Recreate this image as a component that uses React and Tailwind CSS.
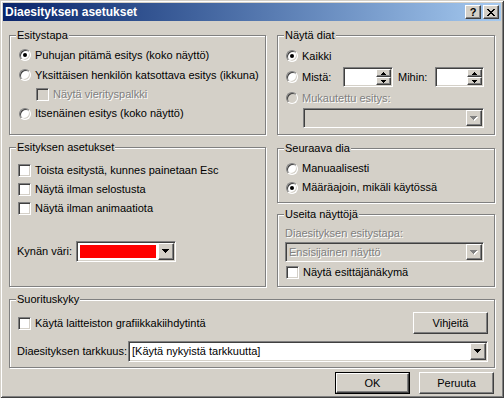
const raised =
  "bg-[#d4d0c8] border border-t-white border-l-white border-r-[#404040] border-b-[#404040] shadow-[inset_-1px_-1px_0_#808080]";
const sunken =
  "border border-t-[#808080] border-l-[#808080] border-r-white border-b-white shadow-[inset_1px_1px_0_#404040,inset_-1px_-1px_0_#d4d0c8]";
const dim = "text-[#808080] [text-shadow:1px_1px_0_#fff]";

const Arrow = ({ disabled }) => (
  <svg width="8" height="5" viewBox="0 0 8 5" shapeRendering="crispEdges">
    {disabled && (
      <g fill="#fff">
        <rect x="1" y="1" width="7" height="1" />
        <rect x="2" y="2" width="5" height="1" />
        <rect x="3" y="3" width="3" height="1" />
        <rect x="4" y="4" width="1" height="1" />
      </g>
    )}
    <g fill={disabled ? "#808080" : "#000"}>
      <rect x="0" y="0" width="7" height="1" />
      <rect x="1" y="1" width="5" height="1" />
      <rect x="2" y="2" width="3" height="1" />
      <rect x="3" y="3" width="1" height="1" />
    </g>
  </svg>
);

const SmallArrow = ({ up }) => (
  <svg width="5" height="3" viewBox="0 0 5 3" shapeRendering="crispEdges" fill="#000">
    {up ? (
      <>
        <rect x="2" y="0" width="1" height="1" />
        <rect x="1" y="1" width="3" height="1" />
        <rect x="0" y="2" width="5" height="1" />
      </>
    ) : (
      <>
        <rect x="0" y="0" width="5" height="1" />
        <rect x="1" y="1" width="3" height="1" />
        <rect x="2" y="2" width="1" height="1" />
      </>
    )}
  </svg>
);

const Radio = ({ checked, disabled }) => (
  <span
    className={`w-[12px] h-[12px] shrink-0 rounded-full border border-t-[#808080] border-l-[#808080] border-r-white border-b-white shadow-[inset_1px_1px_0_#404040,inset_-1px_-1px_0_#d4d0c8] flex items-center justify-center ${
      disabled ? "bg-[#d4d0c8]" : "bg-white"
    }`}
  >
    {checked && <span className="w-[4px] h-[4px] rounded-full bg-black" />}
  </span>
);

const Check = ({ disabled }) => (
  <span
    className={`w-[13px] h-[13px] shrink-0 ${sunken} ${disabled ? "bg-[#d4d0c8]" : "bg-white"}`}
  />
);

const Group = ({ title, className, children }) => (
  <div
    className={`relative border border-[#808080] shadow-[1px_1px_0_#fff,inset_1px_1px_0_#fff] ${className}`}
  >
    <span className="absolute left-[6px] -top-[7px] bg-[#d4d0c8] px-[1px] leading-[13px]">
      {title}
    </span>
    {children}
  </div>
);

const Combo = ({ className, disabled, children }) => (
  <div
    className={`${sunken} flex items-stretch p-[1px] ${disabled ? "bg-[#d4d0c8]" : "bg-white"} ${className}`}
  >
    <div className="flex-1 flex items-center overflow-hidden">{children}</div>
    <div className={`${raised} w-[16px] flex items-center justify-center`}>
      <Arrow disabled={disabled} />
    </div>
  </div>
);

const Spin = ({ className }) => (
  <div className={`${sunken} bg-white h-[20px] p-[1px] flex justify-end ${className}`}>
    <div className="flex flex-col w-[15px]">
      <div className={`${raised} flex-1 flex items-center justify-center`}>
        <SmallArrow up />
      </div>
      <div className={`${raised} flex-1 flex items-center justify-center`}>
        <SmallArrow />
      </div>
    </div>
  </div>
);

const Button = ({ children, isDefault }) =>
  isDefault ? (
    <div className="w-[75px] h-[22px] border border-black flex">
      <div className={`${raised} flex-1 flex items-center justify-center`}>{children}</div>
    </div>
  ) : (
    <div className={`${raised} w-[75px] h-[22px] flex items-center justify-center`}>{children}</div>
  );

export default function App() {
  return (
    <div className="w-[504px] h-[398px] overflow-hidden bg-[#d4d0c8] p-[3px] flex flex-col text-[11px] leading-[13px] text-black [font-family:'Liberation_Sans',Arial,sans-serif] shadow-[inset_1px_1px_0_#d4d0c8,inset_-1px_-1px_0_#404040,inset_2px_2px_0_#fff,inset_-2px_-2px_0_#808080]">
      {/* title bar */}
      <div className="h-[18px] shrink-0 flex items-center pl-[2px] pr-[2px] bg-linear-to-r from-[#0a246a] to-[#a6caf0]">
        <span className="flex-1 text-white font-bold text-[12px] leading-[14px]">Diaesityksen asetukset</span>
        <div className={`${raised} w-[16px] h-[14px] flex items-center justify-center font-bold text-[11px] leading-none`}>
          ?
        </div>
        <div className={`${raised} ml-[2px] w-[16px] h-[14px] flex items-center justify-center`}>
          <svg width="8" height="7" viewBox="0 0 8 7" shapeRendering="crispEdges" fill="#000">
            <rect x="0" y="0" width="2" height="1" />
            <rect x="6" y="0" width="2" height="1" />
            <rect x="1" y="1" width="2" height="1" />
            <rect x="5" y="1" width="2" height="1" />
            <rect x="2" y="2" width="4" height="1" />
            <rect x="3" y="3" width="2" height="1" />
            <rect x="2" y="4" width="4" height="1" />
            <rect x="1" y="5" width="2" height="1" />
            <rect x="5" y="5" width="2" height="1" />
            <rect x="0" y="6" width="2" height="1" />
            <rect x="6" y="6" width="2" height="1" />
          </svg>
        </div>
      </div>

      <div className="pl-[6px] pt-[14px] flex flex-col">
        <div className="flex gap-[11px]">
          {/* left column */}
          <div className="w-[257px] flex flex-col">
            <Group title="Esitystapa" className="h-[100px] pt-[9px] pl-[9px]">
              <div className="flex items-center gap-[4px] h-[20px]">
                <Radio checked />
                <span>Puhujan pitämä esitys (koko näyttö)</span>
              </div>
              <div className="flex items-center gap-[4px] h-[20px]">
                <Radio />
                <span>Yksittäisen henkilön katsottava esitys (ikkuna)</span>
              </div>
              <div className="flex items-center gap-[4px] h-[19px] pl-[17px]">
                <Check disabled />
                <span className={dim}>Näytä vierityspalkki</span>
              </div>
              <div className="flex items-center gap-[4px] h-[19px]">
                <Radio />
                <span>Itsenäinen esitys (koko näyttö)</span>
              </div>
            </Group>

            <Group title="Esityksen asetukset" className="mt-[12px] h-[140px] pt-[13px] pl-[8px]">
              <div className="flex items-center gap-[4px] h-[19px]">
                <Check />
                <span>Toista esitystä, kunnes painetaan Esc</span>
              </div>
              <div className="flex items-center gap-[4px] h-[19px]">
                <Check />
                <span>Näytä ilman selostusta</span>
              </div>
              <div className="flex items-center gap-[4px] h-[19px]">
                <Check />
                <span>Näytä ilman animaatiota</span>
              </div>
              <div className="flex items-center mt-[23px] -ml-[1px] gap-[4px]">
                <span>Kynän väri:</span>
                <Combo className="w-[100px] h-[21px]">
                  <div className="flex-1 h-[13px] mx-[2px] bg-[#ff0000]" />
                </Combo>
              </div>
            </Group>
          </div>

          {/* right column */}
          <div className="w-[218px] flex flex-col">
            <Group title="Näytä diat" className="h-[100px] pt-[10px] pl-[8px]">
              <div className="flex items-center gap-[4px] h-[20px]">
                <Radio checked />
                <span>Kaikki</span>
              </div>
              <div className="flex items-center h-[22px]">
                <Radio />
                <span className="ml-[4px] w-[41px]">Mistä:</span>
                <Spin className="w-[50px]" />
                <span className="ml-[5px] w-[37px]">Mihin:</span>
                <Spin className="w-[49px]" />
              </div>
              <div className="flex items-center gap-[4px] h-[20px]">
                <Radio disabled />
                <span className={dim}>Mukautettu esitys:</span>
              </div>
              <Combo disabled className="ml-[17px] w-[181px] h-[20px]" />
            </Group>

            <Group title="Seuraava dia" className="mt-[13px] h-[55px] pt-[10px] pl-[8px]">
              <div className="flex items-center gap-[4px] h-[19px]">
                <Radio />
                <span>Manuaalisesti</span>
              </div>
              <div className="flex items-center gap-[4px] h-[19px]">
                <Radio checked />
                <span>Määräajoin, mikäli käytössä</span>
              </div>
            </Group>

            <Group title="Useita näyttöjä" className="mt-[11px] h-[73px] pt-[12px] pl-[7px]">
              <div className={`h-[13px] ${dim}`}>Diaesityksen esitystapa:</div>
              <Combo disabled className="mt-[2px] w-[199px] h-[20px]">
                <span className={`pl-[2px] ${dim}`}>Ensisijainen näyttö</span>
              </Combo>
              <div className="flex items-center gap-[4px] h-[15px] mt-[3px] pl-[1px]">
                <Check />
                <span>Näytä esittäjänäkymä</span>
              </div>
            </Group>
          </div>
        </div>

        <Group title="Suorituskyky" className="mt-[12px] w-[486px] h-[69px] pt-[12px] pl-[7px] pr-[6px]">
          <div className="flex items-center justify-between h-[22px]">
            <div className="flex items-center gap-[4px] pl-[1px]">
              <Check />
              <span>Käytä laitteiston grafiikkakiihdytintä</span>
            </div>
            <Button>Vihjeitä</Button>
          </div>
          <div className="flex items-center mt-[7px]">
            <span className="w-[111px] shrink-0">Diaesityksen tarkkuus:</span>
            <Combo className="flex-1 h-[21px]">
              <span className="pl-[2px]">[Käytä nykyistä tarkkuutta]</span>
            </Combo>
          </div>
        </Group>

        <div className="mt-[4px] w-[485px] flex justify-end gap-[9px]">
          <Button isDefault>OK</Button>
          <Button>Peruuta</Button>
        </div>
      </div>
    </div>
  );
}
